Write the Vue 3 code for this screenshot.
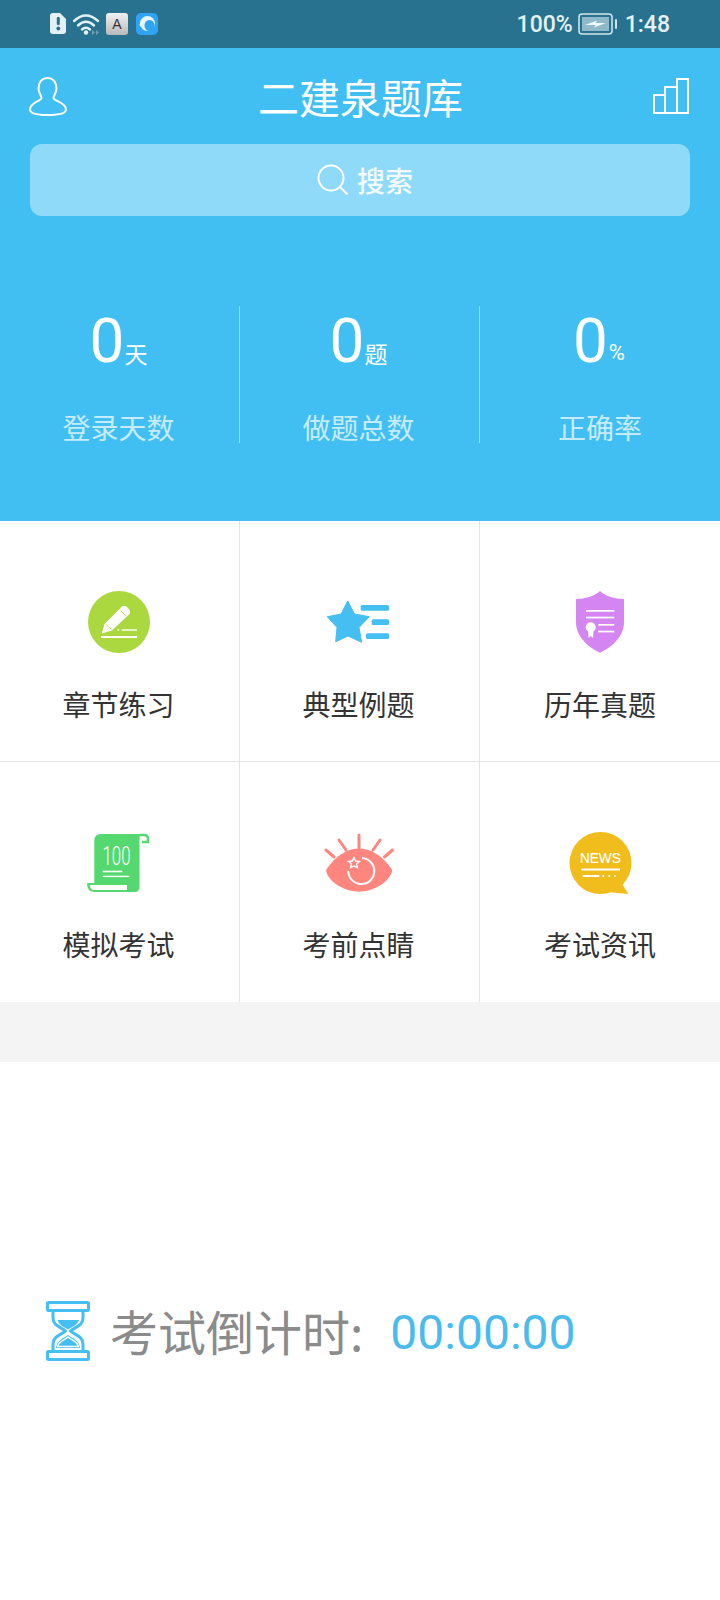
<script setup>
const stats = [
  { value: '0', unit: '天', label: '登录天数', pct: false },
  { value: '0', unit: '题', label: '做题总数', pct: false },
  { value: '0', unit: '%', label: '正确率', pct: true }
]
const labels = ['章节练习', '典型例题', '历年真题', '模拟考试', '考前点睛', '考试资讯']
</script>

<template>
  <div class="page">
    <div class="status">
      <svg class="status-icons" width="170" height="48" viewBox="0 0 170 48">
        <path d="M53 13H60L66 19V31Q66 34 63 34H53Q50 34 50 31V16Q50 13 53 13Z" fill="#e3f1f5" />
        <rect x="56.8" y="17" width="3" height="8" rx="1" fill="#29728f" />
        <circle cx="58.3" cy="28.5" r="1.9" fill="#29728f" />
        <g fill="none" stroke="#e3f1f5" stroke-width="2.4" stroke-linecap="round">
          <path d="M74 21Q86 10 98 21" />
          <path d="M78 25.5Q86 18 94 25.5" />
          <path d="M82 29.5Q86 26 90 29.5" />
        </g>
        <circle cx="86" cy="32.5" r="2.2" fill="#e3f1f5" />
        <path d="M92 30V35L95 32.5ZM96 30V35L99 32.5Z" fill="#6f9fb3" />
        <defs>
          <linearGradient id="keyGrad" x1="0" y1="0" x2="0" y2="1">
            <stop offset="0" stop-color="#f0f0f0" />
            <stop offset="1" stop-color="#b9b9b9" />
          </linearGradient>
        </defs>
        <rect x="106" y="13" width="22" height="22" rx="3" fill="url(#keyGrad)" />
        <text x="117" y="29" class="key-letter" text-anchor="middle">A</text>
        <rect x="136" y="13" width="22" height="22" rx="5" fill="#2fa4f2" />
        <circle cx="147.500" cy="23.500" r="7.500" fill="#e8f5fd" />
        <ellipse cx="149.500" cy="25.500" rx="5" ry="5.500" fill="#2fa4f2" />
        <circle cx="141" cy="25" r="1.500" fill="#e8f5fd" />
      </svg>
      <div class="status-right">
        <span>100%</span>
        <svg width="40" height="24" viewBox="0 0 40 24">
          <rect x="1" y="2" width="33" height="20" rx="3" fill="none" stroke="#cfe3ea" stroke-width="1.600" />
          <rect x="4" y="5" width="27" height="14" fill="#8fb9c8" />
          <path d="M7 13L19 8.500L17.500 11L28 11L16 15.500L17.500 13Z" fill="#eef7fa" />
          <rect x="37" y="7" width="2" height="10" rx="1" fill="#cfe3ea" />
        </svg>
        <span class="time">1:48</span>
      </div>
    </div>

    <div class="hero">
      <div class="topbar">
        <svg class="user" width="40" height="40" viewBox="0 0 40 40">
          <path d="M19.500 2C13 2 10.500 7.500 10.500 12.500C10.500 17 13.500 19.500 13.500 22C13.500 25 2 26 2 33.500C2 38 11 39 19.500 39C28 39 38 38 38 33.500C38 26 25.500 25 25.500 22C25.500 19.500 28.500 17 28.500 12.500C28.500 7.500 26 2 19.500 2Z" fill="none" stroke="#fff" stroke-width="2" />
        </svg>
        <div class="title">二建泉题库</div>
        <svg class="chart" width="36" height="38" viewBox="0 0 36 38">
          <path d="M1 18H12V36H1ZM12 10H24V36H12ZM24 2H35V36H24Z" fill="none" stroke="#fff" stroke-width="2" />
        </svg>
      </div>

      <div class="search">
        <svg width="32" height="32" viewBox="0 0 32 32">
          <circle cx="14" cy="14" r="12.500" fill="none" stroke="#fff" stroke-width="2" />
          <path d="M23 23L30.500 30.500" fill="none" stroke="#fff" stroke-width="2" />
        </svg>
        <span>搜索</span>
      </div>

      <div class="stats">
        <div v-for="s in stats" :key="s.label" class="stat">
          <div class="stat-num"><span class="num">{{ s.value }}</span><span class="unit" :class="{ pct: s.pct }">{{ s.unit }}</span></div>
          <div class="stat-label">{{ s.label }}</div>
        </div>
      </div>
    </div>

    <div class="grid">
      <div class="cell">
        <svg class="ico" viewBox="0 0 120 100">
          <circle cx="59" cy="52" r="31" fill="#acd83f" />
          <path d="M41.700 63.500L44.500 54L62.500 36L66 36L70 40.500L70 43.500L52 60.500Z" fill="#fff" />
          <path d="M46 54.500L51.500 59.500M60.500 40.500L66 46" stroke="#acd83f" stroke-width="0.800" />
          <rect x="41" y="66" width="36" height="2" fill="#fff" />
          <rect x="61.700" y="59.300" width="15.300" height="1.400" fill="#fff" />
          <rect x="57.300" y="59.300" width="2" height="1.400" fill="#fff" />
        </svg>
        <div class="label">{{ labels[0] }}</div>
      </div>
      <div class="cell">
        <svg class="ico" viewBox="0 0 120 100">
          <path d="M47.700 31L54.500 44L69.300 46.700L59 57.500L61.700 72.300L48 66L35.700 71.700L37 57.500L27.300 46.700L41 44Z" fill="#45bff2" stroke="#45bff2" stroke-linejoin="round" />
          <rect x="60.700" y="35" width="28.300" height="5.700" rx="1.500" fill="#45bff2" />
          <rect x="71.700" y="49.300" width="17.300" height="5.700" rx="1.500" fill="#45bff2" />
          <rect x="66" y="63.300" width="23" height="5.700" rx="1.500" fill="#45bff2" />
        </svg>
        <div class="label">{{ labels[1] }}</div>
      </div>
      <div class="cell">
        <svg class="ico" viewBox="0 0 120 100">
          <path d="M60 21C55 26 45 29 36 29V52C36 68 50 78 60 82.700C70 78 84 68 84 52V29C75 29 65 26 60 21Z" fill="#d585f2" />
          <g fill="#fff">
            <rect x="46" y="40" width="28.300" height="1.700" />
            <rect x="46" y="46.700" width="28.300" height="1.700" />
            <rect x="58.300" y="54" width="16" height="1.700" />
            <rect x="58.300" y="60.700" width="16" height="1.700" />
            <circle cx="50.700" cy="57.300" r="5" />
            <path d="M48 60H53.500L53 68L50.700 66L48.500 68Z" />
          </g>
        </svg>
        <div class="label">{{ labels[2] }}</div>
      </div>
      <div class="cell">
        <svg class="ico" viewBox="0 -5 120 100">
          <path d="M41 19H81C79 22 79.500 25 79.500 30V71Q79.500 77 75 77H34Q27 76.500 27 68H34.300V26Q34.300 19 41 19Z" fill="#55d86f" />
          <path d="M80 20H84Q88 20 88 24V27H82" fill="none" stroke="#55d86f" stroke-width="2.500" />
          <path d="M30 70H67V75H34Q30 75 30 70Z" fill="#fff" />
          <text x="42.500" y="50" class="score" textLength="28" lengthAdjust="spacingAndGlyphs">100</text>
          <rect x="42.700" y="55.700" width="19.600" height="1.600" fill="#fff" />
          <rect x="42.700" y="60.700" width="26.600" height="1.400" fill="#fff" />
        </svg>
        <div class="label">{{ labels[3] }}</div>
      </div>
      <div class="cell">
        <svg class="ico" viewBox="0 -5 120 100">
          <path d="M26 55C36 40 48 33.500 59 33.500C70 33.500 82 40 92.300 55C90 68 72 76.700 59 76.700C46 76.700 28 68 26 55Z" fill="#ff857f" />
          <g stroke="#ff857f" stroke-width="3" stroke-linecap="round">
            <path d="M59 20V33" />
            <path d="M39 25L46 35" />
            <path d="M80 25L73 35" />
            <path d="M26 35L34 42" />
            <path d="M92.500 35L84.500 42" />
          </g>
          <path d="M62 43A13 13 0 1 1 48.300 56" fill="none" stroke="#fff" stroke-width="2" />
          <path d="M54 42.500L55.600 46L59.400 46.500L56.600 49L57.400 52.800L54 51L50.600 52.800L51.400 49L48.600 46.500L52.400 46Z" fill="none" stroke="#fff" stroke-width="1.400" />
        </svg>
        <div class="label">{{ labels[4] }}</div>
      </div>
      <div class="cell">
        <svg class="ico" viewBox="0 -5 120 100">
          <circle cx="60.500" cy="48" r="31" fill="#f0bd1c" />
          <path d="M80 66L88.500 79L67 77Z" fill="#f0bd1c" />
          <text x="40" y="47.500" class="news" textLength="40.700" lengthAdjust="spacingAndGlyphs">NEWS</text>
          <rect x="41.300" y="53.500" width="38.700" height="2" fill="#fff" />
          <rect x="42.700" y="60" width="16.600" height="2" fill="#fff" />
          <circle cx="63.300" cy="61" r="1.100" fill="#fff" />
          <circle cx="69.300" cy="61" r="1.100" fill="#fff" />
          <circle cx="75" cy="61" r="1.100" fill="#fff" />
        </svg>
        <div class="label">{{ labels[5] }}</div>
      </div>
    </div>

    <div class="spacer"></div>

    <div class="countdown">
      <svg class="glass" width="80" height="100" viewBox="0 0 80 100">
        <rect x="17.500" y="22.500" width="41" height="8" rx="1" fill="none" stroke="#45bff2" stroke-width="3" />
        <rect x="17.500" y="71.500" width="41" height="8" rx="1" fill="none" stroke="#45bff2" stroke-width="3" />
        <path d="M23 32V38C23 46 32 47.500 35.500 51C32 54.500 23 56 23 64V70M53 32V38C53 46 44 47.500 40.500 51C44 54.500 53 56 53 64V70" fill="none" stroke="#45bff2" stroke-width="3" />
        <path d="M27.500 40H49C47.500 45 42 47 38 49.500C34 47 29 45 27.500 40Z" fill="#45bff2" />
        <path d="M26 68C27 60 34 58 38 55C42 58 49 60 50 68Z" fill="#45bff2" />
        <path d="M27.500 66.500C29 61 35 60 38 57C41 60 47 61 48.500 66.500Z" fill="#45bff2" stroke="#fff" stroke-width="1.300" />
      </svg>
      <span class="cd-label">考试倒计时:</span>
      <span class="cd-time">00:00:00</span>
    </div>
  </div>
</template>

<style>
html, body { margin: 0; background: #fff; }
</style>

<style scoped>
.page {
  width: 720px;
  height: 1600px;
  overflow: hidden;
  background: #fff;
  font-family: "Noto Sans CJK SC", "Noto Sans", sans-serif;
}
.status {
  height: 48px;
  background: #29728f;
  display: flex;
  align-items: center;
  justify-content: space-between;
  padding-right: 50px;
  color: #e3f1f5;
  font-family: Roboto, sans-serif;
  font-size: 23px;
  font-weight: 500;
}
.status-icons { display: block; }
.key-letter { font: 500 14px "Liberation Sans", sans-serif; fill: #333; }
.status-right { display: flex; align-items: center; gap: 5px; }
.status-right .time { margin-left: 2px; }
.hero { background: #42bff2; height: 473px; padding: 0 30px; box-sizing: border-box; }
.topbar {
  height: 96px;
  display: flex;
  align-items: center;
  justify-content: space-between;
}
.topbar svg { display: block; }
.user { margin-left: -2px; }
.chart { margin-right: 1px; }
.title { color: #fff; font-size: 41px; line-height: 48px; }
.search {
  height: 72px;
  border-radius: 12px;
  background: #8fdaf8;
  display: flex;
  align-items: center;
  justify-content: center;
  gap: 8px;
  padding-left: 10px;
  color: #f2fbff;
  font-size: 28px;
  font-weight: 500;
}
.stats {
  display: grid;
  grid-template-columns: repeat(3, 240px);
  margin: 90px -30px 0;
  width: 720px;
}
.stat {
  height: 137px;
  border-right: 1px solid rgba(255, 255, 255, 0.45);
  box-sizing: border-box;
  text-align: center;
}
.stat:last-child { border-right: none; }
.stat-num {
  height: 66px;
  margin-right: 2px;
  display: flex;
  align-items: flex-end;
  justify-content: center;
  color: #fff;
  line-height: 1;
}
.num { font: 400 62px/62px Roboto, sans-serif; }
.unit { font-size: 23px; line-height: 30px; position: relative; top: -4px; }
.unit.pct { font-family: Roboto, sans-serif; font-size: 22px; margin-left: 1px; }
.stat-label {
  margin-top: 35px;
  margin-right: 2px;
  color: #c6ecfb;
  font-size: 28px;
  line-height: 40px;
}
.stat:last-child .stat-label { margin-right: 0; }
.grid {
  display: grid;
  grid-template-columns: repeat(3, 240px);
  grid-template-rows: 241px 240px;
}
.cell {
  box-sizing: border-box;
  border-right: 1px solid #e4e4e4;
  border-bottom: 1px solid #e4e4e4;
  padding-top: 49px;
  display: flex;
  flex-direction: column;
  align-items: center;
}
.cell:nth-child(3n) { border-right: none; }
.cell:nth-child(n+4) { border-bottom: none; padding-top: 48px; }
.ico { width: 120px; height: 100px; display: block; flex: none; }
.score { font: 300 25px Roboto, sans-serif; fill: #fff; }
.news { font: 400 14px "Liberation Sans", sans-serif; fill: #fff; stroke: #fff; stroke-width: 0.15px; }
.label {
  margin-top: 14px;
  margin-right: 2px;
  font-size: 28px;
  line-height: 40px;
  color: #333;
}
.cell:nth-child(3n) .label { margin-right: 0; }
.spacer { height: 60px; background: #f4f4f4; }
.countdown {
  margin-top: 218px;
  height: 100px;
  display: flex;
  align-items: center;
  padding-left: 30px;
}
.glass { display: block; flex: none; }
.cd-label {
  margin-top: 0;
  font-size: 48px;
  color: #8b8b8b;
  line-height: 60px;
}
.cd-time {
  margin-left: 27px;
  margin-top: 6px;
  font: 400 48px/60px Roboto, sans-serif;
  color: #4bbbec;
}
</style>
